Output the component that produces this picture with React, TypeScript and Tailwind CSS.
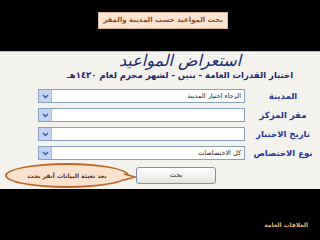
import React from "react";

const font = { fontFamily: '"DejaVu Sans", "Noto Sans", sans-serif' };

function Arrow() {
  return (
    <div className="w-[13px] h-full bg-[#c3d3f5] border-r border-[#a9bde6] flex items-center justify-center">
      <svg width="7" height="5" viewBox="0 0 7 5">
        <path d="M1 1 L3.5 3.5 L6 1" fill="none" stroke="#3a5aa8" strokeWidth="1.4" />
      </svg>
    </div>
  );
}

function Row({ label, value }: { label: string; value?: string }) {
  return (
    <div className="flex items-center justify-end pr-[2px] h-[14px] gap-[3px]">
      <div className="w-[207px] h-[14px] border border-[#8aa0bf] bg-white flex items-center">
        <Arrow />
        <div dir="rtl" className="flex-1 text-right pr-[3px] text-[6.5px] text-[#222] leading-none truncate">
          {value}
        </div>
      </div>
      <div dir="rtl" className="w-[70px] text-center text-[8.5px] font-bold text-[#1e3a9a] leading-none whitespace-nowrap">
        {label}
      </div>
    </div>
  );
}

export default function App() {
  return (
    <div style={font} className="w-[320px] h-[240px] bg-black overflow-hidden flex flex-col">
      {/* header */}
      <div className="h-[51px] pt-[12px] pl-[6px] flex justify-center">
        <div dir="rtl" className="w-[130px] h-[17px] bg-[#fbe4d2] border border-[#d9b89a] flex items-center justify-center text-[7px] font-bold text-[#9a4b1c] whitespace-nowrap">
          بحث المواعيد حسب المدينة والمقر
        </div>
      </div>

      {/* panel */}
      <div className="bg-[#f3f2ed] border-t border-[#bdbdbd] h-[138px] flex flex-col">
        <div className="pl-[40px] text-center">
          <div dir="rtl" className="text-[16px] leading-[17px] italic text-[#1b2a72]">
            استعراض المواعيد
          </div>
          <div dir="rtl" className="text-[8.5px] leading-[12px] font-bold text-[#1b2a72] whitespace-nowrap">
            اختبار القدرات العامة - بنين - لشهر محرم لعام ١٤٣٠هـ
          </div>
        </div>

        <div className="mt-[8px] flex flex-col gap-[5px]">
          <Row label="المدينة" value="الرجاء إختيار المدينة" />
          <Row label="مقر المركز" />
          <Row label="تاريخ الاختبار" />
          <Row label="نوع الاختصاص" value="كل الاختصاصات" />
        </div>

        <div className="mt-[4px] flex items-center h-[23px]">
          <div className="relative ml-[5px] w-[124px] h-[25px] rounded-[50%] border-2 border-[#bd6524] bg-[#fbe2cf] flex items-center justify-center">
            <span dir="rtl" className="text-[6px] text-[#6b3414] font-bold whitespace-nowrap">
              بعد تعبئة البيانات أنقر بحث
            </span>
            <svg className="absolute right-[-9px] top-[8px]" width="12" height="8" viewBox="0 0 12 8">
              <path d="M0 1 L11 4 L0 7" fill="#fbe2cf" stroke="#bd6524" strokeWidth="1.5" />
            </svg>
          </div>
          <div className="ml-[7px] w-[80px] h-[17px] rounded-[3px] border border-[#7d93ad] bg-gradient-to-b from-white to-[#e4e4e0] flex items-center justify-center">
            <span dir="rtl" className="text-[6.5px] text-[#222]">بحث</span>
          </div>
        </div>
      </div>

      {/* footer */}
      <div className="flex-1 flex justify-end pr-[12px] pt-[33px]">
        <span dir="rtl" className="text-[6px] font-bold text-[#e9b36e] leading-none whitespace-nowrap">
          العلاقات العامة
        </span>
      </div>
    </div>
  );
}
